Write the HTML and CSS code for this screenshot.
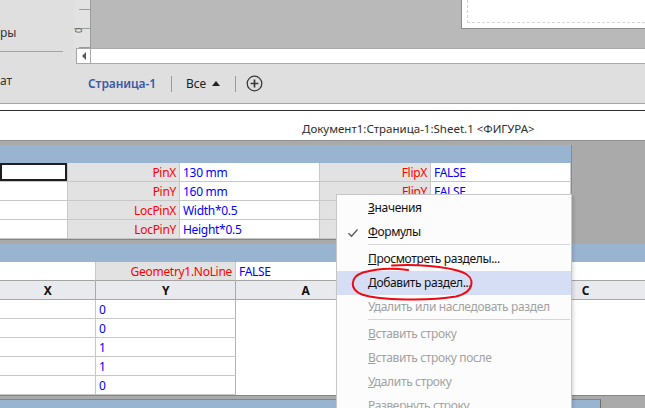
FILE: index.html
```html
<!DOCTYPE html>
<html lang="ru">
<head>
<meta charset="utf-8">
<title>ShapeSheet</title>
<link rel="stylesheet" href="styles.css">
</head>
<body>
<div class="app">
  <div class="top">
    <div class="side">
      <div class="side-item s1">ры</div>
      <div class="side-rule"></div>
      <div class="side-item s2">ат</div>
    </div>
    <div class="main">
      <div class="canvas-row">
        <div class="ruler">
          <span class="tick t1"></span>
          <span class="tick t2"></span>
          <span class="ruler-num">0</span>
          <span class="tick t3"></span>
        </div>
        <div class="canvas">
          <div class="page"><div class="page-inner"></div></div>
        </div>
      </div>
      <div class="hscroll">
        <div class="arrow-btn"><span class="arrow-left"></span></div>
        <div class="track"></div>
      </div>
      <div class="tabs">
        <span class="tab-active">Страница-1</span>
        <span class="vsep"></span>
        <span class="tab-all">Все</span>
        <span class="tri"></span>
        <span class="vsep vsep2"></span>
        <svg class="plus" width="17" height="17" viewBox="0 0 17 17">
          <circle cx="8.5" cy="8.5" r="7.3" fill="none" stroke="#3a3a3a" stroke-width="1.3"/>
          <path d="M8.5 4.6V12.4M4.6 8.5H12.4" stroke="#3a3a3a" stroke-width="1.7"/>
        </svg>
      </div>
    </div>
  </div>
  <div class="win-top"></div>
  <div class="title">Документ1:Страница-1:Sheet.1 &lt;ФИГУРА&gt;</div>
  <div class="sheet">
    <section class="sec sec1">
      <div class="sec-head"></div>
      <div class="grid g1">
        <div class="c v sel"></div><div class="c l">PinX</div><div class="c v">130 mm</div><div class="c l">FlipX</div><div class="c v">FALSE</div>
        <div class="c v"></div><div class="c l">PinY</div><div class="c v">160 mm</div><div class="c l">FlipY</div><div class="c v">FALSE</div>
        <div class="c v"></div><div class="c l">LocPinX</div><div class="c v">Width*0.5</div><div class="c l"></div><div class="c v"></div>
        <div class="c v"></div><div class="c l">LocPinY</div><div class="c v">Height*0.5</div><div class="c l"></div><div class="c v"></div>
      </div>
    </section>
    <section class="sec sec2">
      <div class="sec-head"></div>
      <div class="grid g2">
        <div class="blank"></div>
        <div class="c v nl"></div><div class="c l nl">Geometry1.NoLine</div><div class="c v nl wide">FALSE</div>
        <div class="c h">X</div><div class="c h">Y</div><div class="c h">A</div><div class="c h">B</div><div class="c h">C</div>
        <div class="c v"></div><div class="c v yv">0</div>
        <div class="c v"></div><div class="c v yv">0</div>
        <div class="c v"></div><div class="c v yv">1</div>
        <div class="c v"></div><div class="c v yv">1</div>
        <div class="c v"></div><div class="c v yv">0</div>
      </div>
    </section>
    <section class="sec sec3">
      <div class="sec-head"></div>
    </section>
  </div>
</div>

<div class="menu">
  <div class="mi"><span class="u">З</span>начения</div>
  <div class="mi checked">
    <svg class="check" width="12" height="10" viewBox="0 0 12 10"><path d="M1.5 5.2L4.5 8.3L10.5 1.5" fill="none" stroke="#5a5a5a" stroke-width="1.3"/></svg>
    <span class="u">Ф</span>ормулы
  </div>
  <div class="msep"></div>
  <div class="mi"><span class="u">П</span>росмотреть разделы...</div>
  <div class="mi hot">Добавить раздел...</div>
  <div class="mi dis">Удалить или наследовать раздел</div>
  <div class="msep"></div>
  <div class="mi dis"><span class="u">В</span>ставить строку</div>
  <div class="mi dis"><span class="u">В</span>ставить строку после</div>
  <div class="mi dis"><span class="u">У</span>далить строку</div>
  <div class="mi dis"><span class="u">Р</span>азвернуть строку</div>
</div>

<svg class="annot" width="645" height="408" viewBox="0 0 645 408">
  <path d="M392 265.5C415 264 445 266 462 272C476 277 475 292 456 296.5C430 301 380 300.5 362 294.5C349 289.5 350 277 363 272.5C376 268.5 394 268 408 270" fill="none" stroke="#ee0a14" stroke-width="2" stroke-linecap="round" stroke-linejoin="round"/>
</svg>
</body>
</html>
```

FILE: styles.css
```css
* { box-sizing: border-box; }

html, body {
  margin: 0;
  padding: 0;
}

body {
  width: 645px;
  height: 408px;
  overflow: hidden;
  position: relative;
  background: #dfdfdf;
  font-family: "Noto Sans", "Open Sans", sans-serif;
  font-size: 12px;
  color: #222;
}

.app {
  display: flex;
  flex-direction: column;
  width: 645px;
}

.app > * { flex-shrink: 0; }

/* ---------- top area ---------- */
.top {
  display: flex;
  height: 104px;
  background: #dfdfdf;
  border-bottom: 1px solid #a6a6a6;
}

.side {
  width: 74px;
  display: flex;
  flex-direction: column;
}

.side-item {
  height: 18px;
  line-height: 18px;
  color: #333;
  font-size: 12px;
}

.s1 { margin-top: 24px; }

.side-rule {
  width: 63px;
  height: 1px;
  background: #a2a2a2;
  margin-top: 9px;
}

.s2 { margin-top: 20px; }

.main {
  flex: 1;
  display: flex;
  flex-direction: column;
}

.canvas-row {
  display: flex;
  height: 48px;
  flex-shrink: 0;
}

.ruler {
  width: 17px;
  position: relative;
  border-right: 1px solid #9c9c9c;
  background: #e2e2e2;
}

.tick {
  position: absolute;
  height: 1px;
  background: #9c9c9c;
  right: 0;
}

.t1 { top: 9px; width: 11px; }
.t2 { top: 28px; width: 16px; }
.t3 { top: 47px; width: 11px; }

.ruler-num {
  position: absolute;
  left: 2px;
  top: 26px;
  font-size: 9px;
  line-height: 9px;
  color: #555;
  transform: rotate(-90deg);
}

.canvas {
  flex: 1;
  background: #b9b9b9;
  display: flex;
  justify-content: flex-end;
  align-items: flex-start;
}

.page {
  width: 184px;
  height: 29px;
  background: #fff;
  border-left: 1px solid #8c8c8c;
  border-bottom: 1px solid #8c8c8c;
  padding-left: 5px;
}

.page-inner {
  height: 23px;
  border-left: 1px dashed #d4d4d4;
  border-bottom: 1px dashed #d4d4d4;
}

.hscroll {
  display: flex;
  height: 16px;
  flex-shrink: 0;
  margin-left: 2px;
  background: #fff;
  border-top: 1px solid #a8a8a8;
  border-bottom: 1px solid #a8a8a8;
}

.arrow-btn {
  width: 15px;
  border-left: 1px solid #a8a8a8;
  border-right: 1px solid #a8a8a8;
  display: flex;
  align-items: center;
  justify-content: center;
}

.arrow-left {
  width: 0;
  height: 0;
  border-top: 4px solid transparent;
  border-bottom: 4px solid transparent;
  border-right: 4px solid #5a5a5a;
}

.track { flex: 1; }

.tabs {
  flex: 1;
  display: flex;
  align-items: center;
  padding-left: 14px;
}

.tab-active {
  color: #3b59a6;
  font-weight: 600;
  font-size: 12px;
  letter-spacing: -0.1px;
}

.vsep {
  width: 1px;
  height: 16px;
  background: #9a9a9a;
  margin-left: 15px;
}

.tab-all {
  margin-left: 14px;
  color: #222;
  font-size: 12px;
}

.tri {
  width: 0;
  height: 0;
  margin-left: 6px;
  border-left: 4px solid transparent;
  border-right: 4px solid transparent;
  border-bottom: 5px solid #222;
}

.vsep2 { margin-left: 15px; }

.plus { margin-left: 10px; }

/* ---------- shapesheet window ---------- */
.win-top {
  height: 7px;
  background: #fff;
  border-bottom: 1px solid #333;
}

.title {
  height: 29px;
  background: #fff;
  padding-left: 302px;
  padding-top: 10px;
  line-height: 15px;
  color: #2e2e2e;
  font-size: 11.5px;
  white-space: nowrap;
}

.sheet {
  background: #aaaaaa;
  border-top: 1px solid #8e8e8e;
  padding-top: 4px;
  display: flex;
  flex-direction: column;
}

.sec {
  flex-shrink: 0;
  background: #fff;
  border-bottom: 1px solid #858585;
  overflow: hidden;
}

.sec-head {
  height: 18px;
  background: #99b4d1;
}

.sec1 {
  width: 572px;
  border-right: 1px solid #8a8a8a;
}

.sec2 {
  width: 645px;
  margin-top: 4px;
}

.sec3 {
  width: 601px;
  margin-top: 3px;
  border-top: 1px solid #858585;
  border-right: 1px solid #6e6e6e;
  height: 20px;
}

.grid { display: grid; }

.g1 { grid-template-columns: 68px 112px 140px 111px 140px; }

.g2 { grid-template-columns: 96px 140px 140px 140px 140px; }

.c {
  height: 19px;
  line-height: 19px;
  padding: 0 3px;
  border-right: 1px solid #c8c8c8;
  border-bottom: 1px solid #c8c8c8;
  white-space: nowrap;
  overflow: hidden;
  font-size: 12px;
  letter-spacing: -0.3px;
}

.l {
  background: #e2e2e2;
  color: #ff0000;
  text-align: right;
}

.v {
  background: #fff;
  color: #0000ff;
}

.sel { box-shadow: inset 0 0 0 2px #1e1e1e; }

.nl { border-bottom-color: #a5a5a5; }

.wide {
  grid-column: span 3;
  border-right: none;
}

.h {
  background: #e8eaee;
  color: #111;
  font-weight: 700;
  text-align: center;
  border-right-color: #a9a9a9;
  border-bottom-color: #a9a9a9;
}

.yv { border-right-color: #b4b4b4; }

.blank {
  grid-column: 3 / 6;
  grid-row: 3 / 8;
  background: #fff;
}

/* ---------- context menu ---------- */
.menu {
  position: absolute;
  left: 336px;
  top: 194px;
  width: 236px;
  height: 230px;
  padding-top: 1px;
  background: #fcfcfc;
  border: 1px solid #c6c6c6;
  box-shadow: 2px 2px 3px rgba(0, 0, 0, 0.12);
  display: flex;
  flex-direction: column;
}

.mi {
  flex-shrink: 0;
  height: 24px;
  line-height: 24px;
  padding-left: 31px;
  color: #111;
  font-size: 12px;
  letter-spacing: -0.35px;
  white-space: nowrap;
  position: relative;
}

.mi .u { text-decoration: underline; }

.check {
  position: absolute;
  left: 10px;
  top: 8px;
}

.hot { background: #d5def5; }

.dis { color: #a2a2a2; }

.msep {
  flex-shrink: 0;
  height: 1px;
  margin: 0 1px 2px 31px;
  background: #d6d6d6;
}

.annot {
  position: absolute;
  left: 0;
  top: 0;
  pointer-events: none;
}
```
